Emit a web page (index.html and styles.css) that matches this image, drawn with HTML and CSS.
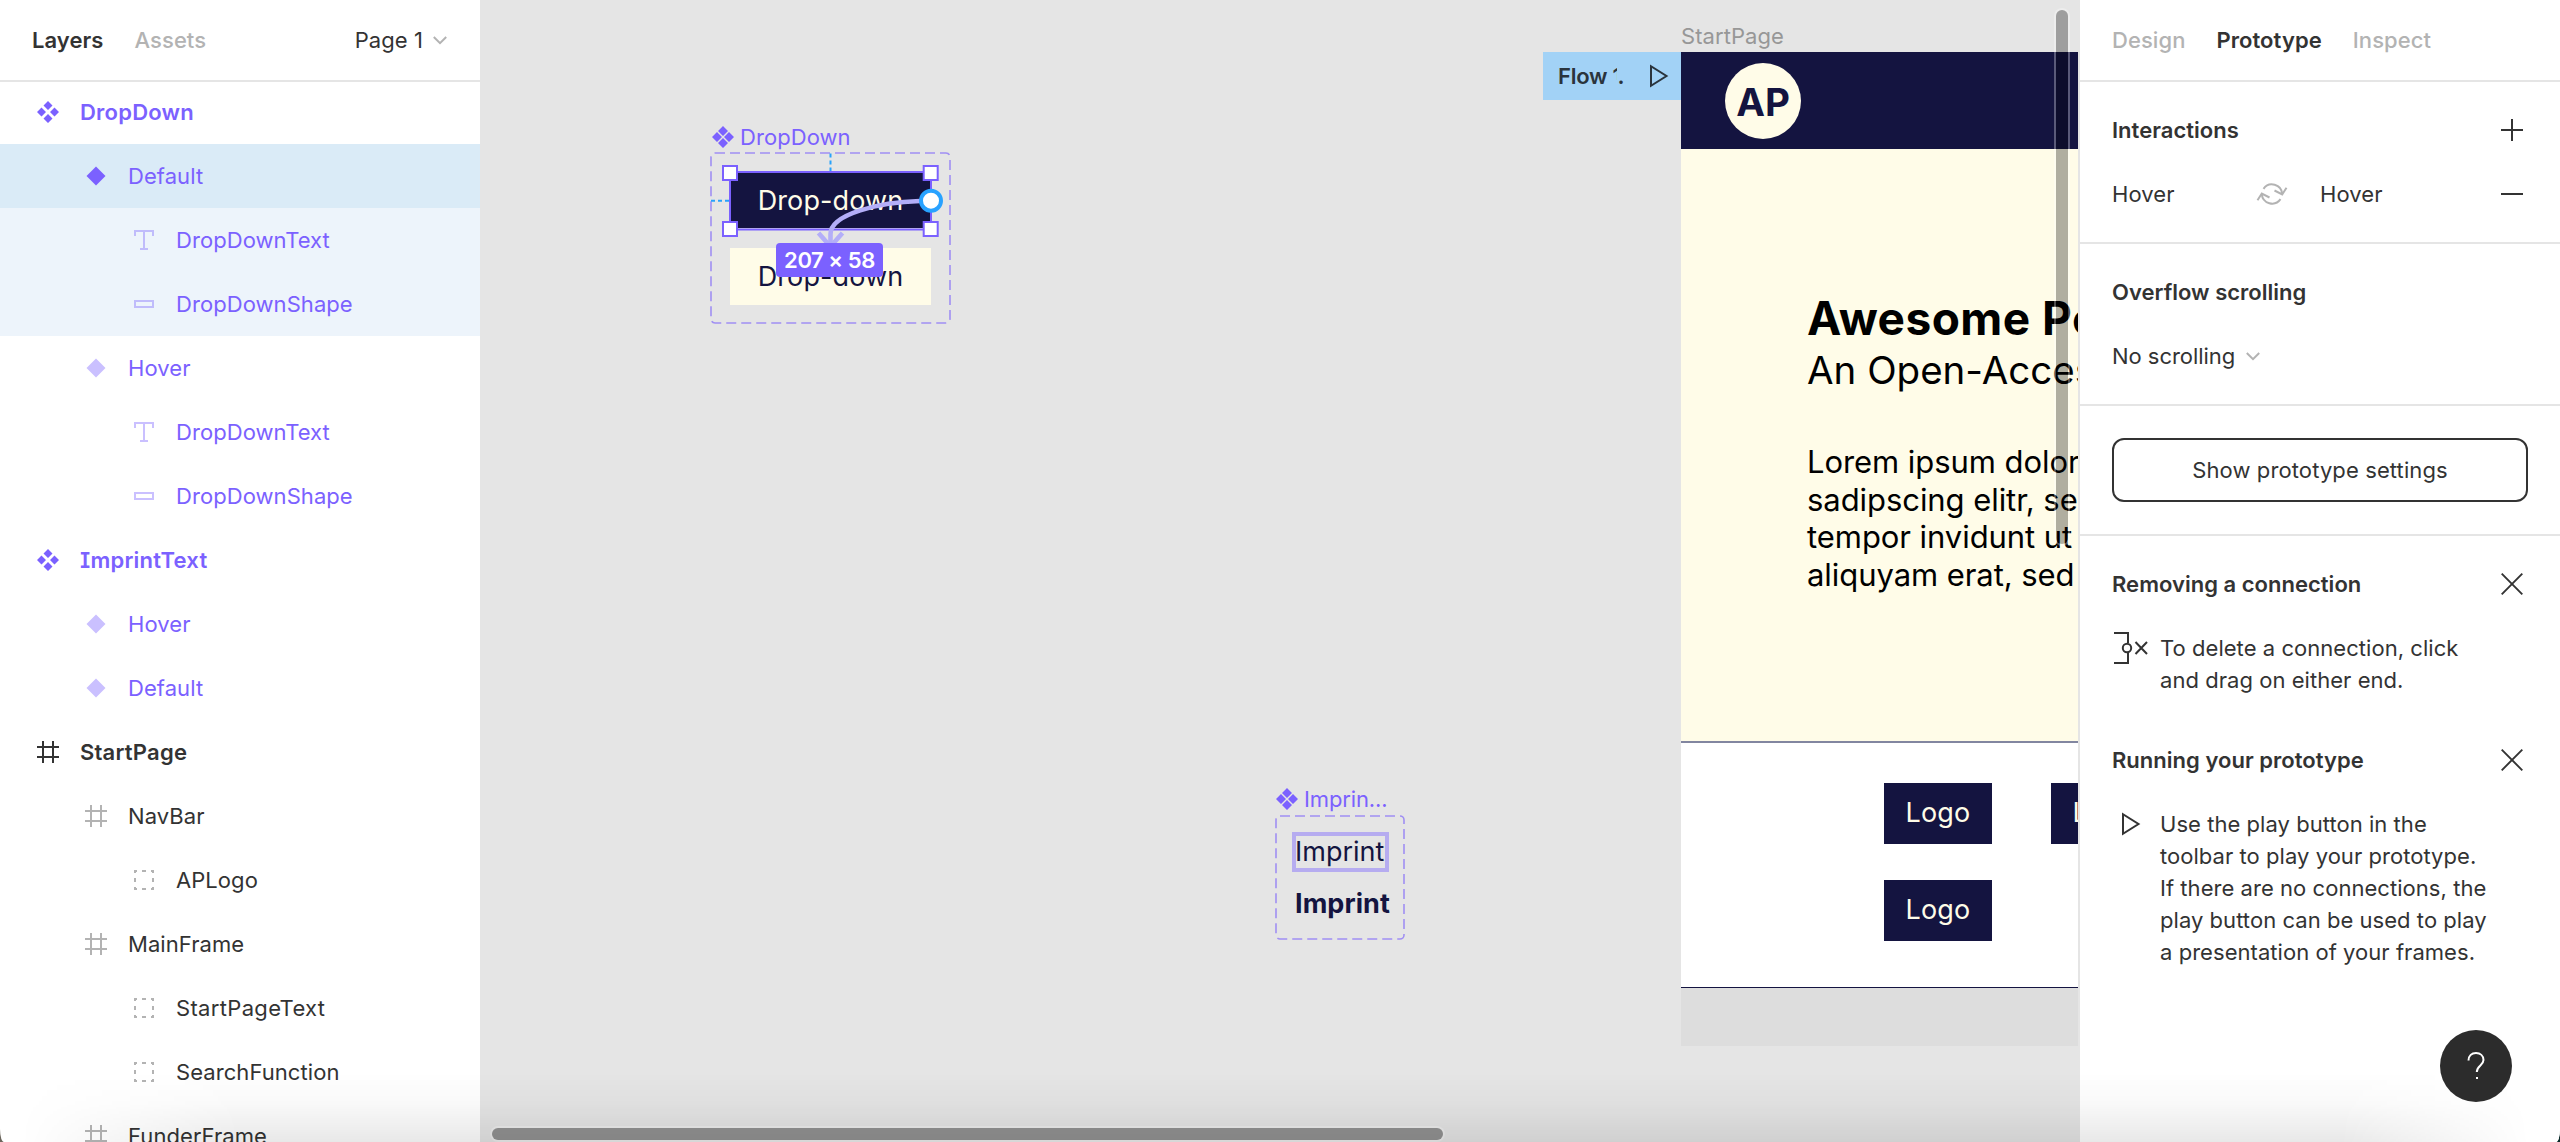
FILE: index.html
```
<!DOCTYPE html>
<html lang="en">
<head>
<meta charset="utf-8">
<title>Prototype editor</title>
<link rel="stylesheet" href="styles.css">
</head>
<body>
<svg class="sprite" aria-hidden="true">
  <symbol id="i-component" viewBox="0 0 22 22"><path fill="currentColor" d="M11 0l4.500 4.500L11 9 6.500 4.500zM11 13l4.500 4.500L11 22l-4.500-4.500zM4.500 6.500L9 11l-4.500 4.500L0 11zM17.500 6.500L22 11l-4.500 4.500L13 11z"/></symbol>
  <symbol id="i-component-tight" viewBox="0 0 22 22"><path fill="currentColor" d="M11 0l5 5-5 5-5-5zM11 12l5 5-5 5-5-5zM5 6l5 5-5 5-5-5zM17 6l5 5-5 5-5-5z"/></symbol>
  <symbol id="i-variant" viewBox="0 0 22 22"><path fill="currentColor" d="M11 1.500l9.500 9.500-9.500 9.500L1.500 11z"/></symbol>
  <symbol id="i-text" viewBox="0 0 22 22"><path fill="none" stroke="currentColor" stroke-width="2" d="M2 7V2h18v5M11 2v18M7 20h8"/></symbol>
  <symbol id="i-rect" viewBox="0 0 22 22"><path fill="none" stroke="currentColor" stroke-width="2" d="M2 8h18v6H2z"/></symbol>
  <symbol id="i-frame" viewBox="0 0 22 22"><path fill="none" stroke="currentColor" stroke-width="2" d="M6 0v22M16 0v22M0 6h22M0 16h22"/></symbol>
  <symbol id="i-group" viewBox="0 0 22 22"><path fill="none" stroke="currentColor" stroke-width="2" d="M1 2h3M9 2h4M18 2h3M1 20h3M9 20h4M18 20h3M2 1v3M2 9v4M2 18v3M20 1v3M20 9v4M20 18v3"/></symbol>
  <symbol id="i-chevron" viewBox="0 0 14 9"><path fill="none" stroke="currentColor" stroke-width="2" d="M.8 1L7 7.200 13.200 1"/></symbol>
  <symbol id="i-close" viewBox="0 0 22 22"><path fill="none" stroke="currentColor" stroke-width="1.900" d="M.7.7l20.600 20.600M21.300.7L.7 21.300"/></symbol>
  <symbol id="i-play" viewBox="0 0 20 24"><path fill="none" stroke="currentColor" stroke-width="2" d="M2 2.200v19.600L17.500 12z"/></symbol>
</svg>

<div class="app">
  <aside class="layers">
    <header class="layers-head">
      <span class="tab active">Layers</span>
      <span class="tab">Assets</span>
      <span class="page-pick">Page 1 <svg class="chevron"><use href="#i-chevron"/></svg></span>
    </header>
    <ul class="tree">
      <li class="row top purple"><svg class="ico"><use href="#i-component"/></svg><span>DropDown</span></li>
      <li class="row l1 purple selected"><svg class="ico"><use href="#i-variant"/></svg><span>Default</span></li>
      <li class="row l2 purple faint child"><svg class="ico"><use href="#i-text"/></svg><span>DropDownText</span></li>
      <li class="row l2 purple faint child"><svg class="ico"><use href="#i-rect"/></svg><span>DropDownShape</span></li>
      <li class="row l1 purple faint"><svg class="ico"><use href="#i-variant"/></svg><span>Hover</span></li>
      <li class="row l2 purple faint"><svg class="ico"><use href="#i-text"/></svg><span>DropDownText</span></li>
      <li class="row l2 purple faint"><svg class="ico"><use href="#i-rect"/></svg><span>DropDownShape</span></li>
      <li class="row top purple serif-i"><svg class="ico"><use href="#i-component"/></svg><span>ImprintText</span></li>
      <li class="row l1 purple faint"><svg class="ico"><use href="#i-variant"/></svg><span>Hover</span></li>
      <li class="row l1 purple faint"><svg class="ico"><use href="#i-variant"/></svg><span>Default</span></li>
      <li class="row top"><svg class="ico"><use href="#i-frame"/></svg><span>StartPage</span></li>
      <li class="row l1 faint"><svg class="ico"><use href="#i-frame"/></svg><span>NavBar</span></li>
      <li class="row l2 faint"><svg class="ico"><use href="#i-group"/></svg><span>APLogo</span></li>
      <li class="row l1 faint"><svg class="ico"><use href="#i-frame"/></svg><span>MainFrame</span></li>
      <li class="row l2 faint loose"><svg class="ico"><use href="#i-group"/></svg><span>StartPageText</span></li>
      <li class="row l2 faint"><svg class="ico"><use href="#i-group"/></svg><span>SearchFunction</span></li>
      <li class="row l1 faint"><svg class="ico"><use href="#i-frame"/></svg><span>FunderFrame</span></li>
    </ul>
  </aside>

  <main class="canvas">
    <div class="node set-label dropdown-label"><svg class="ico"><use href="#i-component-tight"/></svg><span>DropDown</span></div>
    <svg class="node set-frame dropdown-frame"><rect x="1" y="1" width="239" height="170" rx="4"/></svg>
    <div class="node variant variant-default">Drop-down</div>
    <div class="node variant variant-hover">Drop-down</div>
    <svg class="node overlay" viewBox="700 140 260 150">
      <path class="guide" d="M830.500 153.500V171M711 200.700h18"/>
      <rect class="selection" x="730" y="172" width="201" height="57.500"/>
      <g class="handle">
        <rect x="723" y="166" width="14" height="14"/><rect x="923.700" y="166" width="14" height="14"/>
        <rect x="723" y="222" width="14" height="14"/><rect x="923.700" y="222" width="14" height="14"/>
      </g>
      <path class="noodle" d="M920 201C880 202 830.500 214 830.500 234v12"/>
      <path class="noodle" d="M818.500 233l12 13.500 12-13.500"/>
      <circle class="port" cx="931" cy="200.700" r="10"/>
    </svg>
    <div class="node size-badge">207 × 58</div>

    <div class="node set-label imprint-label"><svg class="ico"><use href="#i-component-tight"/></svg><span>Imprin...</span></div>
    <svg class="node set-frame imprint-frame"><rect x="1" y="1" width="128" height="123" rx="4"/></svg>
    <div class="node imprint-default">Imprint</div>
    <div class="node imprint-hover">Imprint</div>

    <div class="node flow"><span class="flow-name">Flow <i class="cut">1</i>.</span><svg class="play"><use href="#i-play"/></svg></div>
    <div class="node frame-label">StartPage</div>
    <section class="node start-page">
      <nav class="nav"><div class="ap-logo">AP</div></nav>
      <div class="hero">
        <h1>Awesome Po</h1>
        <h2>An Open-Access</h2>
        <p>Lorem ipsum dolor<br>sadipscing elitr, sed<br>tempor invidunt ut<br>aliquyam erat, sed</p>
      </div>
      <div class="funders"><div class="logo">Logo</div><div class="logo">Logo</div><div class="logo">Logo</div></div>
      <div class="footer"></div>
    </section>

    <div class="node scroll scroll-y"></div>
    <div class="node scroll scroll-x"></div>
  </main>

  <aside class="props">
    <header class="props-head"><span class="tab">Design</span><span class="tab active">Prototype</span><span class="tab">Inspect</span></header>
    <section class="block">
      <div class="line"><b>Interactions</b><svg class="act" viewBox="0 0 22 22"><path d="M11 0v22M0 11h22"/></svg></div>
      <div class="line"><span class="trigger">Hover</span>
        <svg class="cycle" viewBox="0 0 32 24"><path d="M7.500 6.800A10.300 10.300 0 0 1 26.200 12M18.500 8.500l7.700 4 4.300-6.700M24.500 17.200A10.300 10.300 0 0 1 5.800 12M13.500 15.500l-7.700-4-4.300 6.700"/></svg>
        <span>Hover</span><svg class="act" viewBox="0 0 22 22"><path d="M0 11h22"/></svg></div>
    </section>
    <section class="block">
      <div class="line"><b>Overflow scrolling</b></div>
      <div class="line tight">No scrolling <svg class="chevron"><use href="#i-chevron"/></svg></div>
    </section>
    <section class="block button-block"><button class="settings">Show prototype settings</button></section>
    <section class="help">
      <div class="line"><b>Removing a connection</b><svg class="act"><use href="#i-close"/></svg></div>
      <div class="tip"><svg class="tip-ico" viewBox="0 0 36 34"><path d="M0 2h14v10M14 22v10H0M21.500 11l11.500 12M33 11L21.500 23"/><circle cx="13" cy="17" r="4.200"/></svg>
        <p>To delete a connection, click<br>and drag on either end.</p></div>
      <div class="line"><b>Running your prototype</b><svg class="act"><use href="#i-close"/></svg></div>
      <div class="tip"><svg class="play tip-play"><use href="#i-play"/></svg>
        <p>Use the play button in the<br>toolbar to play your prototype.<br>If there are no connections, the<br>play button can be used to play<br>a presentation of your frames.</p></div>
    </section>
  </aside>

  <div class="bottom-shade"></div>
  <div class="help-button"><svg viewBox="0 0 20 30"><path d="M2.500 9.500C2.500 4.500 5.800 2 10 2s7.500 2.700 7.500 7c0 5.500-6.700 5.500-6.700 12"/><path d="M10 27h2"/></svg></div>
</div>
</body>
</html>
```
FILE: styles.css
```
* { box-sizing: border-box; }
body {
  margin: 0;
  height: 1142px;
  overflow: hidden;
  background: linear-gradient(90deg, #6b655c 50%, #0b2b2a 50%);
  font: 22px/32px Inter, "Liberation Sans", sans-serif;
  letter-spacing: .003em;
  color: #333;
}
.sprite { position: absolute; width: 0; height: 0; }
.app {
  position: relative;
  display: grid;
  grid-template-columns: 480px 1598px 482px;
  height: 1142px;
  overflow: hidden;
  border-radius: 0 0 4px 4px / 0 0 13px 13px;
  background: #fff;
}
.ico { width: 22px; height: 22px; flex: none; }
.chevron { width: 14px; height: 9px; color: #b3b3b3; }
.tab { font-weight: 500; color: #b3b3b3; }
.tab.active { font-weight: 600; color: #333; }

/* Layers panel */
.layers { height: 1142px; overflow: hidden; }
.layers-head {
  display: flex;
  align-items: center;
  gap: 31px;
  height: 82px;
  margin-bottom: -2px;
  padding: 0 33px 0 32px;
  border-bottom: 2px solid #e5e5e5;
}
.page-pick { display: flex; align-items: center; gap: 10px; margin-left: auto; }
.tree { margin: 0; padding: 0; list-style: none; }
.row { display: flex; align-items: center; gap: 21px; height: 64px; padding-left: 37px; }
.row.top { font-weight: 600; letter-spacing: .01em; }
.row.serif-i { font-feature-settings: "cv08"; }
.row.l1 { padding-left: 85px; }
.row.l2 { padding-left: 133px; }
.row.loose { letter-spacing: .015em; }
.row.purple { color: #7b61ff; }
.row.faint .ico { color: #b3b3b3; }
.row.purple.faint .ico { color: #cac0ff; }
.row.selected { background: #daebf7; }
.row.child { background: #edf4fb; }
.row.child.purple.faint .ico { color: #c0bcfb; }

/* Canvas */
.canvas { position: relative; overflow: hidden; background: #e5e5e5; }
.node { position: absolute; }
.set-label { display: flex; align-items: center; gap: 6px; color: #7b61ff; }
.dropdown-label { left: 232px; top: 121px; }
.imprint-label { left: 796px; top: 783px; letter-spacing: -.006em; }
.set-frame { fill: none; stroke: #a08ff3; stroke-width: 1.600; stroke-dasharray: 10 5; }
.dropdown-frame { left: 230px; top: 152px; width: 241px; height: 173px; }
.imprint-frame { left: 795px; top: 815px; width: 131px; height: 126px; }
.variant {
  left: 250px;
  width: 201px;
  font-size: 27px;
  letter-spacing: .004em;
  text-align: center;
}
.variant-default { top: 173px; height: 55px; line-height: 56px; background: #141440; color: #fffce8; }
.variant-hover { top: 248px; height: 57px; line-height: 57px; background: #fffce8; color: #141440; }
.overlay { left: 220px; top: 140px; width: 260px; height: 150px; fill: none; }
.guide { stroke: #28a2fb; stroke-width: 2; stroke-dasharray: 4 3; }
.selection { stroke: #7b61ff; stroke-width: 2; }
.handle { fill: #fff; stroke: #7b61ff; stroke-width: 2; }
.noodle { stroke: #b3aef8; stroke-width: 4.600; }
.port { fill: #fff; stroke: #28a2ff; stroke-width: 4; }
.size-badge {
  left: 296px;
  top: 243px;
  width: 107px;
  height: 34px;
  border-radius: 4px;
  background: #7b61ff;
  color: #fff;
  font-weight: 600;
  line-height: 35px;
  letter-spacing: -.02em;
  text-align: center;
}
.imprint-default, .imprint-hover { left: 812px; color: #141440; font-size: 27px; line-height: 32px; }
.imprint-default { top: 832px; width: 97px; height: 40px; padding-left: 2px; border: 4px solid #b6acf0; line-height: 32px; letter-spacing: 0; text-indent: -3px; }
.imprint-hover { left: 815px; top: 888px; font-weight: 700; }

.flow {
  display: flex;
  align-items: center;
  justify-content: space-between;
  left: 1063px;
  top: 52px;
  width: 138px;
  height: 48px;
  padding: 0 12px 0 15px;
  background: #a2d2f6;
  color: #2a343d;
}
.flow-name { display: flex; font-weight: 600; letter-spacing: -.012em; white-space: pre; }
.cut { width: 5px; height: 20px; overflow: hidden; font-style: normal; }
.play { width: 20px; height: 24px; flex: none; }
.frame-label { left: 1201px; top: 20px; color: #979797; }
.start-page { left: 1201px; top: 52px; width: 877px; overflow: hidden; }
.nav { display: flex; align-items: center; height: 97px; padding-left: 44px; background: #141440; }
.ap-logo {
  width: 76px;
  height: 76px;
  padding-top: 1px;
  border-radius: 50%;
  background: #fffce8;
  color: #141440;
  font-size: 38.500px;
  font-weight: 700;
  line-height: 76px;
  letter-spacing: 0;
  text-align: center;
}
.hero {
  height: 594px;
  padding: 141px 0 0 126px;
  border-bottom: 2px solid #8286a0;
  background: #fffce8;
  color: #000;
  white-space: nowrap;
}
.hero h1 { margin: 0; font-size: 46px; font-weight: 700; line-height: 56px; letter-spacing: .01em; }
.hero h2 { margin: 0; font-size: 38.500px; font-weight: 400; line-height: 48.600px; letter-spacing: 0; }
.hero p { margin: 48.400px 0 0; font-size: 31px; line-height: 37.700px; letter-spacing: -.002em; }
.funders {
  display: grid;
  grid-template-columns: 108px 108px;
  gap: 36.300px 59px;
  align-content: start;
  height: 245px;
  padding: 40px 0 0 203px;
  border-bottom: 1px solid #141440;
  background: #fff;
}
.logo {
  height: 60.700px;
  background: #141440;
  color: #fffce8;
  font-size: 27px;
  line-height: 60px;
  letter-spacing: .007em;
  text-align: center;
}
.footer { height: 58px; background: #ddd; }
.scroll { border-radius: 8px; background: rgba(0, 0, 0, .31); box-shadow: 0 0 0 2px rgba(255, 255, 255, .3); }
.scroll-y { left: 1576px; top: 10px; width: 12px; height: 534px; }
.scroll-x { left: 12px; top: 1128px; width: 951px; height: 12px; background: #929292; }

/* Prototype panel */
.props { border-left: 2px solid #e5e5e5; background: #fff; }
.props-head {
  display: flex;
  align-items: center;
  gap: 31px;
  height: 82px;
  padding: 0 32px;
  border-bottom: 2px solid #e5e5e5;
}
.block { padding: 16px 32px; border-bottom: 2px solid #e5e5e5; }
.line { display: flex; align-items: center; height: 64px; }
.line.tight { gap: 11px; letter-spacing: -.002em; }
.line b { font-weight: 600; letter-spacing: .001em; }
.act { width: 22px; height: 22px; margin: 0 5px 0 auto; fill: none; stroke: #333; stroke-width: 2; }
.trigger { width: 144px; }
.cycle { width: 32px; height: 24px; margin-right: 32px; fill: none; stroke: #b3b3b3; stroke-width: 2; }
.button-block { padding: 32px; }
.settings {
  display: block;
  width: 100%;
  height: 64px;
  border: 2px solid #333;
  border-radius: 12px;
  background: #fff;
  color: #333;
  font: inherit;
  letter-spacing: .005em;
}
.help { padding: 16px 32px; }
.tip { display: flex; padding: 16px 0 32px; letter-spacing: .002em; }
.tip p { margin: 0; white-space: nowrap; }
.tip-ico { width: 36px; height: 34px; margin: -1px 10px 0 2px; fill: none; stroke: #333; stroke-width: 2; }
.tip-play { margin: 4px 19px 0 9px; }

.bottom-shade {
  position: absolute;
  left: 0;
  right: 0;
  bottom: 0;
  height: 70px;
  background: linear-gradient(rgba(0, 0, 0, 0), rgba(0, 0, 0, .025) 45%, rgba(0, 0, 0, .09));
  -webkit-mask-image: linear-gradient(90deg, transparent 20px, #000 240px, #000 2340px, transparent 2530px);
  mask-image: linear-gradient(90deg, transparent 20px, #000 240px, #000 2340px, transparent 2530px);
}
.help-button {
  position: absolute;
  right: 48px;
  bottom: 40px;
  display: flex;
  align-items: center;
  justify-content: center;
  width: 72px;
  height: 72px;
  border-radius: 50%;
  background: #2c2c2c;
}
.help-button svg { width: 20px; height: 30px; fill: none; stroke: #fff; stroke-width: 2; }
```
